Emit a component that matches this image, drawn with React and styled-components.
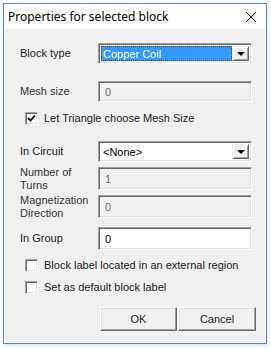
import React from "react";
import styled, { createGlobalStyle } from "styled-components";

const Global = createGlobalStyle`
  html, body { margin: 0; padding: 0; background: #ffffff; }
  body { width: 271px; height: 348px; overflow: hidden; }
  * { box-sizing: border-box; }
`;

const Window = styled.div`
  margin: 3px 0 0 3px;
  width: 264px;
  height: 341px;
  border: 1px solid #4a88d4;
  background: #ffffff;
  display: flex;
  flex-direction: column;
  box-shadow: 1px 2px 4px rgba(0, 0, 0, 0.12);
`;

const TitleBar = styled.div`
  height: 25px;
  display: flex;
  align-items: center;
  justify-content: space-between;
  padding: 0 9px 0 4px;
  font-family: "Noto Sans", "Open Sans", sans-serif;
  font-size: 12px;
  color: #000;
`;

const CloseIcon = styled.svg`
  width: 12px;
  height: 12px;
  display: block;
`;

const Content = styled.div`
  flex: 1;
  margin: 0 1px 1px 1px;
  background: #f0f0f0;
  padding: 14px 13px 0 15px;
  display: flex;
  flex-direction: column;
  font-family: "Liberation Sans", Arial, sans-serif;
  font-size: 11px;
  color: #1a1a1a;
`;

const Row = styled.div`
  display: grid;
  grid-template-columns: 78px 1fr;
  grid-template-rows: ${(p) => p.$h || 21}px;
  align-items: center;
  margin-top: ${(p) => p.$mt || 0}px;
`;

const Label = styled.div`
  line-height: 13px;
  color: ${(p) => (p.$disabled ? "#333333" : "#1a1a1a")};
`;

const Sunken = styled.div`
  height: 100%;
  border: 1px solid;
  border-color: #a0a0a0 #ffffff #ffffff #a0a0a0;
  box-shadow: inset 1px 1px 0 #696969, inset -1px -1px 0 #e3e3e3;
  background: ${(p) => (p.$white ? "#ffffff" : "#f0f0f0")};
  display: flex;
  align-items: center;
  padding: 2px;
  color: ${(p) => (p.$disabled ? "#6d6d6d" : "#000")};
`;

const FieldText = styled.span`
  padding-left: 4px;
`;

const ComboValue = styled.div`
  flex: 1;
  height: 100%;
  display: flex;
  align-items: center;
  padding-left: 2px;
  background: ${(p) => (p.$selected ? "#3399ff" : "transparent")};
  color: ${(p) => (p.$selected ? "#ffffff" : "#000")};
  outline: ${(p) => (p.$selected ? "1px dotted #5a3a10" : "none")};
  outline-offset: -1px;
`;

const ComboBody = styled.div`
  flex: 1;
  height: 100%;
  display: flex;
  background: #ffffff;
`;

const DropButton = styled.div`
  width: 17px;
  height: 100%;
  background: #f0f0f0;
  border: 1px solid;
  border-color: #f0f0f0 #696969 #696969 #f0f0f0;
  box-shadow: inset 1px 1px 0 #ffffff, inset -1px -1px 0 #a0a0a0;
  display: flex;
  align-items: center;
  justify-content: center;
`;

const Arrow = styled.div`
  width: 0;
  height: 0;
  border-left: 4px solid transparent;
  border-right: 4px solid transparent;
  border-top: 4px solid #000;
`;

const CheckRow = styled.label`
  display: flex;
  align-items: center;
  gap: 6px;
  margin-top: ${(p) => p.$mt || 0}px;
  padding-left: 5px;
  height: 14px;
`;

const Box = styled.div`
  width: 13px;
  height: 13px;
  border: 1px solid;
  border-color: #a0a0a0 #ffffff #ffffff #a0a0a0;
  box-shadow: inset 1px 1px 0 #696969, inset -1px -1px 0 #e3e3e3;
  background: #ffffff;
  display: flex;
  align-items: center;
  justify-content: center;
`;

const Buttons = styled.div`
  display: flex;
  justify-content: flex-end;
  margin-top: 13px;
  margin-right: -4px;
`;

const Button = styled.div`
  width: ${(p) => p.$w}px;
  height: 24px;
  border: 1px solid;
  border-color: #ffffff #696969 #696969 #ffffff;
  box-shadow: inset -1px -1px 0 #a0a0a0, inset 1px 1px 0 #e3e3e3;
  background: #f0f0f0;
  display: flex;
  align-items: center;
  justify-content: center;
  margin-left: ${(p) => p.$ml || 0}px;
`;

function Combo({ value, selected }) {
  return (
    <Sunken $white>
      <ComboBody>
        <ComboValue $selected={selected}>{value}</ComboValue>
      </ComboBody>
      <DropButton>
        <Arrow />
      </DropButton>
    </Sunken>
  );
}

function Check({ checked }) {
  return (
    <Box>
      {checked && (
        <svg width="9" height="9" viewBox="0 0 9 9">
          <path d="M1 4 L3.5 6.5 L8 1.5" fill="none" stroke="#000" strokeWidth="1.8" />
        </svg>
      )}
    </Box>
  );
}

export default function App() {
  return (
    <>
      <Global />
      <Window>
        <TitleBar>
          <span>Properties for selected block</span>
          <CloseIcon viewBox="0 0 12 12">
            <path d="M1 1 L11 11 M11 1 L1 11" stroke="#000" strokeWidth="1" />
          </CloseIcon>
        </TitleBar>
        <Content>
          <Row $h={21}>
            <Label>Block type</Label>
            <Combo value="Copper Coil" selected />
          </Row>
          <Row $h={21} $mt={17}>
            <Label $disabled>Mesh size</Label>
            <Sunken $disabled>
              <FieldText>0</FieldText>
            </Sunken>
          </Row>
          <CheckRow $mt={9}>
            <Check checked />
            <span>Let Triangle choose Mesh Size</span>
          </CheckRow>
          <Row $h={21} $mt={16}>
            <Label>In Circuit</Label>
            <Combo value="<None>" />
          </Row>
          <Row $h={23} $mt={5}>
            <Label $disabled>Number of<br />Turns</Label>
            <Sunken $disabled>
              <FieldText>1</FieldText>
            </Sunken>
          </Row>
          <Row $h={23} $mt={5}>
            <Label $disabled>Magnetization<br />Direction</Label>
            <Sunken $disabled>
              <FieldText>0</FieldText>
            </Sunken>
          </Row>
          <Row $h={23} $mt={9}>
            <Label>In Group</Label>
            <Sunken $white>
              <FieldText>0</FieldText>
            </Sunken>
          </Row>
          <CheckRow $mt={8}>
            <Check />
            <span>Block label located in an external region</span>
          </CheckRow>
          <CheckRow $mt={8}>
            <Check />
            <span>Set as default block label</span>
          </CheckRow>
          <Buttons>
            <Button $w={77}>OK</Button>
            <Button $w={78} $ml={1}>Cancel</Button>
          </Buttons>
        </Content>
      </Window>
    </>
  );
}
